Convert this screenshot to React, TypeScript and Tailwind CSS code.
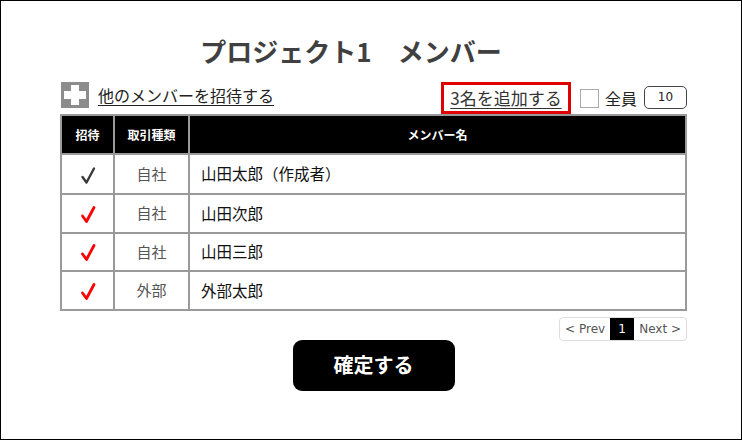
import React from "react";

const jp = { fontFamily: '"Noto Sans CJK JP", "Noto Sans", sans-serif' };

function Check({ red }: { red?: boolean }) {
  return (
    <svg width="16" height="20" viewBox="0 0 16 20" className="inline-block -mt-[2px]">
      <path
        d="M2.5 11 L6.5 16.5 L14 2.5"
        fill="none"
        stroke={red ? "#ff0000" : "#3a3a3a"}
        strokeWidth={red ? 2.8 : 2.4}
        strokeLinecap="round"
        strokeLinejoin="round"
      />
    </svg>
  );
}

const rows = [
  { red: false, type: "自社", name: "山田太郎（作成者）" },
  { red: true, type: "自社", name: "山田次郎" },
  { red: true, type: "自社", name: "山田三郎" },
  { red: true, type: "外部", name: "外部太郎" },
];

export default function App() {
  return (
    <div className="w-[742px] h-[440px] border border-black bg-white overflow-hidden" style={jp}>
      <div className="ml-[59px] w-[627px] flex flex-col">
        <div className="h-[80px] pt-[31px] flex justify-center pr-[45px]">
          <h1 className="text-[26px] leading-[38px] font-bold text-[#404040]">プロジェクト1　メンバー</h1>
        </div>
        <div className="flex items-end justify-between h-[33px]">
          <div className="flex items-center gap-[9px] pb-[6px] pl-[1px]">
            <div className="w-[28px] h-[26px] bg-[#8c8c8c] relative">
              <div className="absolute left-[10px] top-[3px] w-[8px] h-[20px] bg-white" />
              <div className="absolute left-[3px] top-[9px] w-[22px] h-[8px] bg-white" />
            </div>
            <span className="text-[16px] leading-[20px] text-[#222] underline underline-offset-[3px]">他のメンバーを招待する</span>
          </div>
          <div className="flex items-center">
            <div className="border-[3px] border-[#e00000] h-[32px] w-[130px] flex items-center justify-center">
              <span className="text-[17px] leading-[20px] text-[#333] underline underline-offset-[3px]">3名を追加する</span>
            </div>
            <div className="ml-[9px] w-[19px] h-[19px] border border-[#aaa] bg-white" />
            <span className="ml-[6px] text-[16px] text-[#222]">全員</span>
            <div className="ml-[7px] w-[43px] h-[23px] border border-[#444] rounded-[5px] flex items-center justify-center text-[12px] text-[#222] mb-[2px]" style={{ fontFamily: '"DejaVu Sans", sans-serif' }}>
              10
            </div>
          </div>
        </div>
        <table className="w-[627px] border-collapse table-fixed">
          <colgroup>
            <col className="w-[53px]" />
            <col className="w-[75px]" />
            <col />
          </colgroup>
          <thead>
            <tr className="h-[39px] bg-black text-white text-[12px] font-bold">
              <th className="border-2 border-[#9a9a9a]">招待</th>
              <th className="border-2 border-[#9a9a9a]">取引種類</th>
              <th className="border-2 border-[#9a9a9a]">メンバー名</th>
            </tr>
          </thead>
          <tbody>
            {rows.map((r, i) => (
              <tr key={i} className={i === 0 ? "h-[40px]" : "h-[38.5px]"}>
                <td className="border-2 border-[#9a9a9a] text-center align-middle">
                  <Check red={r.red} />
                </td>
                <td className="border-2 border-[#9a9a9a] text-center text-[15px] text-[#555]">{r.type}</td>
                <td className="border-2 border-[#9a9a9a] pl-[11px] text-[15.5px] text-[#111]">{r.name}</td>
              </tr>
            ))}
          </tbody>
        </table>
        <div className="flex justify-end mt-[6px]">
          <div className="flex items-stretch h-[24px] border border-[#ddd] rounded-[4px] text-[12px] overflow-hidden" style={{ fontFamily: '"DejaVu Sans", sans-serif' }}>
            <span className="px-[5px] flex items-center text-[#555]">&lt; Prev</span>
            <span className="w-[24px] bg-black text-white flex items-center justify-center">1</span>
            <span className="px-[5px] flex items-center text-[#555]">Next &gt;</span>
          </div>
        </div>
        <div className="flex justify-center -mt-[1px]">
          <button className="w-[162px] h-[51px] bg-black text-white text-[20px] font-bold rounded-[9px]">確定する</button>
        </div>
      </div>
    </div>
  );
}
